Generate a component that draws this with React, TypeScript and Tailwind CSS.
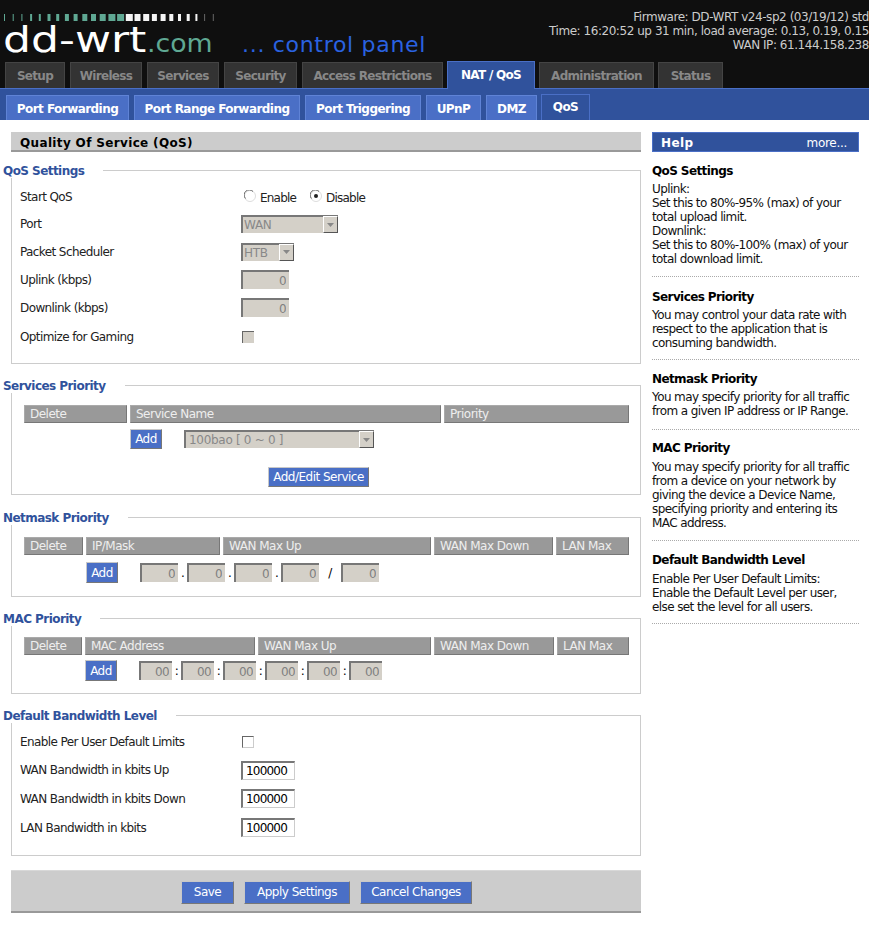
import type { ReactNode } from 'react';

const topTabs = [
  { label: 'Setup', w: 'w-[60px]' },
  { label: 'Wireless', w: 'w-[72px]' },
  { label: 'Services', w: 'w-[72px]' },
  { label: 'Security', w: 'w-[73px]' },
  { label: 'Access Restrictions', w: 'w-[141px]' },
];

const subTabs = [
  { label: 'Port Forwarding', w: 'w-[123px]' },
  { label: 'Port Range Forwarding', w: 'w-[166px]' },
  { label: 'Port Triggering', w: 'w-[116px]' },
  { label: 'UPnP', w: 'w-[55px]' },
  { label: 'DMZ', w: 'w-[51px]' },
];

const ticks = [1, 1, 1, 2, 2, 3, 3, 4, 4, 5, 5, 6, 7, 7, 7, 6, 6, 5, 5, 4, 3, 3, 2, 1, 1];

function Logo() {
  return (
    <div className="w-[440px] h-[62px] pl-[3px] pt-[14px] shrink-0">
      <svg width="210" height="7" viewBox="0 0 210 7" className="block ml-px">
        {ticks.map((w, i) => (
          <rect key={i} x={i * 8.7} y="0" width={w} height="7" fill={i < 14 ? '#5fa893' : i < 23 ? '#f4f4f4' : '#666'} />
        ))}
      </svg>
      <div className="flex items-baseline h-[35px] mt-[2px] font-['DejaVu_Sans',sans-serif] leading-[35px] tracking-normal">
        <span className="text-[35px] text-white [transform:scaleX(1.26)] origin-left w-[144px]">dd-wrt</span>
        <span className="text-[25px] text-[#5fa893] w-[95px] [transform:scaleX(1.07)] origin-left">.com</span>
        <span className="text-[22px] text-[#2a62e0] tracking-[0.7px] whitespace-nowrap">... control panel</span>
      </div>
    </div>
  );
}

function Header() {
  return (
    <div className="bg-[#0f0f0f] h-[88px] relative">
      <div className="flex">
        <Logo />
        <div className="flex-1 pt-[10px] text-right text-[#cccccc] text-[12px] leading-[14px] tracking-[-0.45px] whitespace-nowrap">
          <div>Firmware: DD-WRT v24-sp2 (03/19/12) std</div>
          <div>Time: 16:20:52 up 31 min, load average: 0.13, 0.19, 0.15</div>
          <div>WAN IP: 61.144.158.238</div>
        </div>
      </div>
      <div className="flex h-[26px] pl-[5px]">
        {topTabs.map((t) => (
          <div key={t.label} className={`${t.w} mr-[5px] bg-[#333333] border-t border-x border-[#444444] text-[#888888] font-bold text-[12px] leading-[27px] text-center tracking-[-0.7px]`}>
            {t.label}
          </div>
        ))}
        <div className="w-[88px] ml-[-1px] mr-[4px] mt-[-1px] h-[28px] bg-[#30529c] border-t border-x border-[#4a6fc6] text-white font-bold text-[12px] leading-[26px] text-center tracking-[-0.7px]">
          NAT / QoS
        </div>
        <div className="w-[115px] mr-[4px] bg-[#333333] border-t border-x border-[#444444] text-[#888888] font-bold text-[12px] leading-[27px] text-center tracking-[-0.7px]">
          Administration
        </div>
        <div className="w-[65px] bg-[#333333] border-t border-x border-[#444444] text-[#888888] font-bold text-[12px] leading-[27px] text-center tracking-[-0.7px]">
          Status
        </div>
      </div>
    </div>
  );
}

function SubNav() {
  return (
    <div className="h-[32px] bg-[#30529c] border-t border-[#4a6fc6] pt-[6px] pl-[6px] flex">
      {subTabs.map((t) => (
        <div key={t.label} className={`${t.w} mr-[5px] h-[25px] bg-[#4a6fc6] border-t border-x border-[#5f83d6] text-white font-bold text-[12px] leading-[26px] text-center tracking-[-0.55px]`}>
          {t.label}
        </div>
      ))}
      <div className="w-[49px] ml-[-1px] mt-[-1px] h-[26px] bg-[#30529c] border-t border-x border-[#4a6fc6] text-white font-bold text-[12px] leading-[25px] text-center tracking-[-0.55px]">
        QoS
      </div>
    </div>
  );
}

function Group({ title, className, children }: { title: string; className: string; children: ReactNode }) {
  return (
    <fieldset className={`border border-[#cccccc] min-w-0 ${className}`}>
      <legend className="ml-[-9px] pr-[19px] text-[#30529c] font-bold text-[12px] leading-[16px] tracking-[-0.55px]">
        <span className="relative top-px">{title}</span>
      </legend>
      {children}
    </fieldset>
  );
}

function Row({ label, h, children }: { label: string; h: string; children: ReactNode }) {
  return (
    <div className={`flex items-center ${h}`}>
      <div className="w-[229px] pl-[8px] shrink-0">{label}</div>
      {children}
    </div>
  );
}

function DisabledInput({ value, w }: { value: string; w: string }) {
  return (
    <input
      disabled
      readOnly
      value={value}
      className={`${w} h-[19px] shrink-0 bg-[#d4d0c8] text-[#808080] text-right text-[12px] pr-[3px] border-t-2 border-l-2 border-t-[#777777] border-l-[#777777] font-['DejaVu_Sans',sans-serif] tracking-[-0.6px]`}
    />
  );
}

function TextInput() {
  return (
    <input
      readOnly
      value="100000"
      className="w-[54px] h-[19px] bg-white text-black text-[12px] pl-[3px] border-t-2 border-l-2 border-t-[#777777] border-l-[#777777] border-r border-b border-r-[#cccccc] border-b-[#cccccc] font-['DejaVu_Sans',sans-serif] tracking-[-0.8px]"
    />
  );
}

function FakeSelect({ value, w, pl }: { value: string; w: string; pl: string }) {
  return (
    <div className={`${w} ${pl} h-[18px] relative bg-[#d4d0c8] border-t-2 border-l-2 border-t-[#777777] border-l-[#777777] text-[#888888] text-[12px] leading-[16px] tracking-[-0.3px]`}>
      {value}
      <div className="absolute right-0 top-[-1px] w-[15px] h-[17px] bg-[#d4d0c8] border border-t-white border-l-white border-r-[#555555] border-b-[#555555] flex items-center justify-center">
        <svg width="7" height="4" viewBox="0 0 7 4">
          <path d="M0 0h7L3.5 4z" fill="#888888" />
        </svg>
      </div>
    </div>
  );
}

function BlueButton({ label, w, h }: { label: string; w: string; h: string }) {
  return (
    <button className={`${w} ${h} shrink-0 bg-[#4a6fc6] text-white text-[12px] border border-t-[#c8c8c8] border-l-[#c8c8c8] border-r-[#777777] border-b-[#777777] tracking-[-0.5px] font-['DejaVu_Sans',sans-serif]`}>
      {label}
    </button>
  );
}

function HeadCell({ label, w }: { label: string; w: string }) {
  return (
    <div className={`${w} h-[18px] shrink-0 bg-[#999999] border border-t-[#aaaaaa] border-l-[#aaaaaa] border-r-[#777777] border-b-[#777777] text-[#eeeeee] text-[12px] leading-[16px] pl-[5px] tracking-[-0.5px]`}>
      {label}
    </div>
  );
}

function Radio({ on }: { on?: boolean }) {
  return (
    <svg width="12" height="12" viewBox="0 0 12 12" className="shrink-0 mt-[-3px]">
      <circle cx="6" cy="6" r="5.5" fill="#ffffff" stroke="#dddddd" />
      <path d="M1.5 8.5A5 5 0 0 1 9 1.5" fill="none" stroke="#666666" />
      {on && <circle cx="6" cy="6" r="2" fill="#222222" />}
    </svg>
  );
}

function Checkbox({ disabled }: { disabled?: boolean }) {
  return (
    <div className={`w-[12px] h-[12px] ml-px border-t border-l border-t-[#666666] border-l-[#666666] ${disabled ? 'bg-[#d4d0c8]' : 'bg-white border-r border-b border-r-[#cccccc] border-b-[#cccccc]'}`} />
  );
}

function Sep({ c }: { c: string }) {
  return <span className="w-[9px] text-center text-black shrink-0">{c}</span>;
}

function Main() {
  return (
    <div className="w-[641px] shrink-0 pl-[11px]">
      <div className="h-[20px] bg-[#cccccc] border-b-2 border-[#999999] pl-[9px] text-black font-bold text-[12px] leading-[22px] tracking-[0.35px]">
        Quality Of Service (QoS)
      </div>

      <Group title="QoS Settings" className="mt-[10px] h-[202px] pt-[5px]">
        <Row label="Start QoS" h="h-[28px]">
          <span className="ml-[3px] flex items-center tracking-[-0.8px]">
            <Radio />
            <span className="ml-[4px] mt-px">Enable</span>
            <span className="ml-[14px] flex items-center"><Radio on /></span>
            <span className="ml-[4px] mt-px">Disable</span>
          </span>
        </Row>
        <Row label="Port" h="h-[26px]"><FakeSelect value="WAN" w="w-[97px]" pl="pl-[1px]" /></Row>
        <Row label="Packet Scheduler" h="h-[29px]"><FakeSelect value="HTB" w="w-[53px]" pl="pl-[1px]" /></Row>
        <Row label="Uplink (kbps)" h="h-[27px]"><DisabledInput value="0" w="w-[48px]" /></Row>
        <Row label="Downlink (kbps)" h="h-[29px]"><DisabledInput value="0" w="w-[48px]" /></Row>
        <Row label="Optimize for Gaming" h="h-[30px]"><Checkbox disabled /></Row>
      </Group>

      <Group title="Services Priority" className="mt-[13px] h-[118px] pt-[12px]">
        <div className="flex pl-[12px] gap-[3px]">
          <HeadCell label="Delete" w="w-[103px]" />
          <HeadCell label="Service Name" w="w-[311px]" />
          <HeadCell label="Priority" w="w-[185px]" />
        </div>
        <div className="flex items-center pl-[118px] mt-[6px]">
          <BlueButton label="Add" w="w-[32px]" h="h-[20px]" />
          <div className="ml-[22px]"><FakeSelect value="100bao [ 0 ~ 0 ]" w="w-[190px]" pl="pl-[3px]" /></div>
        </div>
        <div className="pl-[256px] mt-[18px]">
          <BlueButton label="Add/Edit Service" w="w-[101px]" h="h-[20px]" />
        </div>
      </Group>

      <Group title="Netmask Priority" className="mt-[14px] h-[88px] pt-[12px]">
        <div className="flex pl-[12px] gap-[3px]">
          <HeadCell label="Delete" w="w-[59px]" />
          <HeadCell label="IP/Mask" w="w-[134px]" />
          <HeadCell label="WAN Max Up" w="w-[208px]" />
          <HeadCell label="WAN Max Down" w="w-[119px]" />
          <HeadCell label="LAN Max" w="w-[73px]" />
        </div>
        <div className="flex items-center pl-[74px] mt-[7px]">
          <BlueButton label="Add" w="w-[32px]" h="h-[21px]" />
          <div className="ml-[22px] flex items-center">
            <DisabledInput value="0" w="w-[38px]" />
            <Sep c="." />
            <DisabledInput value="0" w="w-[38px]" />
            <Sep c="." />
            <DisabledInput value="0" w="w-[38px]" />
            <Sep c="." />
            <DisabledInput value="0" w="w-[38px]" />
            <span className="w-[22px] text-center text-black">/</span>
            <DisabledInput value="0" w="w-[38px]" />
          </div>
        </div>
      </Group>

      <Group title="MAC Priority" className="mt-[13px] h-[84px] pt-[11px]">
        <div className="flex pl-[12px] gap-[3px]">
          <HeadCell label="Delete" w="w-[58px]" />
          <HeadCell label="MAC Address" w="w-[170px]" />
          <HeadCell label="WAN Max Up" w="w-[173px]" />
          <HeadCell label="WAN Max Down" w="w-[120px]" />
          <HeadCell label="LAN Max" w="w-[72px]" />
        </div>
        <div className="flex items-center pl-[73px] mt-[5px]">
          <BlueButton label="Add" w="w-[32px]" h="h-[21px]" />
          <div className="ml-[22px] flex items-center">
            <DisabledInput value="00" w="w-[33px]" />
            <Sep c=":" />
            <DisabledInput value="00" w="w-[33px]" />
            <Sep c=":" />
            <DisabledInput value="00" w="w-[33px]" />
            <Sep c=":" />
            <DisabledInput value="00" w="w-[33px]" />
            <Sep c=":" />
            <DisabledInput value="00" w="w-[33px]" />
            <Sep c=":" />
            <DisabledInput value="00" w="w-[33px]" />
          </div>
        </div>
      </Group>

      <Group title="Default Bandwidth Level" className="mt-[13px] h-[149px] pt-[5px]">
        <Row label="Enable Per User Default Limits" h="h-[28px]"><Checkbox /></Row>
        <Row label="WAN Bandwidth in kbits Up" h="h-[28px]"><TextInput /></Row>
        <Row label="WAN Bandwidth in kbits Down" h="h-[29px]"><TextInput /></Row>
        <Row label="LAN Bandwidth in kbits" h="h-[29px]"><TextInput /></Row>
      </Group>

      <div className="mt-[14px] h-[43px] bg-[#cccccc] border-t border-t-[#d8d8d8] border-b-2 border-b-[#999999] flex items-center pl-[170px] pt-[2px] gap-[10px]">
        <BlueButton label="Save" w="w-[53px]" h="h-[23px]" />
        <BlueButton label="Apply Settings" w="w-[106px]" h="h-[23px]" />
        <BlueButton label="Cancel Changes" w="w-[112px]" h="h-[23px]" />
      </div>
    </div>
  );
}

function HelpItem({ title, children, h, gap = 'mt-[3px]' }: { title: string; children: ReactNode; h: string; gap?: string }) {
  return (
    <div className={`${h} border-b border-dotted border-[#aaaaaa]`}>
      <div className="font-bold text-black leading-[16px] tracking-[-0.6px]">{title}</div>
      <div className={`${gap} leading-[14px]`}>{children}</div>
    </div>
  );
}

function Help() {
  return (
    <div className="w-[207px] ml-[11px] shrink-0">
      <div className="h-[20px] bg-[#30529c] border border-[#4a6fc6] flex justify-between pl-[8px] pr-[11px] text-white leading-[20px]">
        <span className="font-bold tracking-[0.4px]">Help</span>
        <span className="tracking-[-0.3px]">more...</span>
      </div>
      <div className="pt-[11px] text-[#111111]">
        <HelpItem title="QoS Settings" h="h-[114px]">
          Uplink:<br />
          Set this to 80%-95% (max) of your total upload limit.<br />
          Downlink:<br />
          Set this to 80%-100% (max) of your total download limit.
        </HelpItem>
        <HelpItem title="Services Priority" h="h-[83px] pt-[12px]">
          You may control your data rate with respect to the application that is consuming bandwidth.
        </HelpItem>
        <HelpItem title="Netmask Priority" h="h-[70px] pt-[11px]">
          You may specify priority for all traffic from a given IP address or IP Range.
        </HelpItem>
        <HelpItem title="MAC Priority" h="h-[111px] pt-[10px]" gap="mt-[4px]">
          You may specify priority for all traffic from a device on your network by giving the device a Device Name, specifying priority and entering its MAC address.
        </HelpItem>
        <HelpItem title="Default Bandwidth Level" h="h-[83px] pt-[11px]" gap="mt-[4px]">
          Enable Per User Default Limits:<br />
          Enable the Default Level per user, else set the level for all users.
        </HelpItem>
      </div>
    </div>
  );
}

export default function App() {
  return (
    <div className="w-[869px] min-h-[925px] bg-white font-['DejaVu_Sans',sans-serif] text-[12px] tracking-[-0.6px] text-[#222222] overflow-hidden">
      <Header />
      <SubNav />
      <div className="flex pt-[12px]">
        <Main />
        <Help />
      </div>
    </div>
  );
}
